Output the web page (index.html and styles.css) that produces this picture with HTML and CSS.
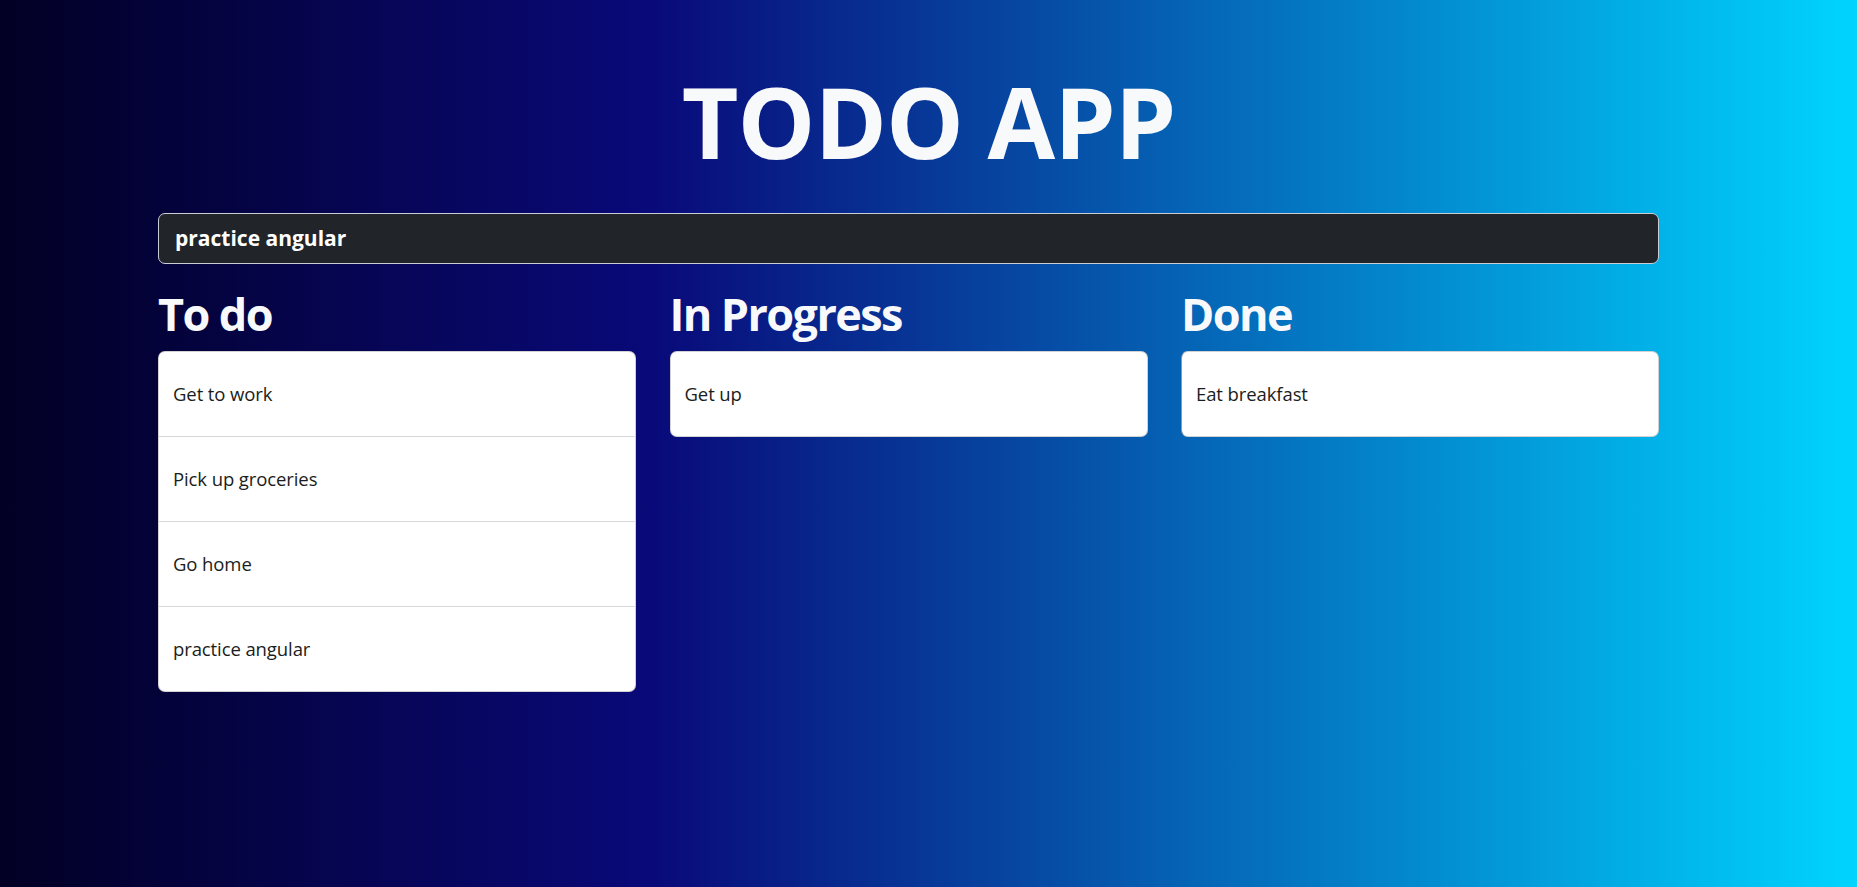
FILE: index.html
```html
<!DOCTYPE html>
<html lang="en">
<head>
<meta charset="utf-8">
<title>Todo App</title>
<link rel="stylesheet" href="styles.css">
</head>
<body>
<main class="page">
  <h1 class="title">TODO APP</h1>
  <div class="container">
    <input class="new-task" type="text" value="practice angular">
    <div class="board">
      <section class="column">
        <h2 class="column-title">To do</h2>
        <ul class="list">
          <li class="item">Get to work</li>
          <li class="item">Pick up groceries</li>
          <li class="item">Go home</li>
          <li class="item">practice angular</li>
        </ul>
      </section>
      <section class="column">
        <h2 class="column-title">In Progress</h2>
        <ul class="list">
          <li class="item">Get up</li>
        </ul>
      </section>
      <section class="column">
        <h2 class="column-title">Done</h2>
        <ul class="list list-done">
          <li class="item">Eat breakfast</li>
        </ul>
      </section>
    </div>
  </div>
</main>
</body>
</html>
```
FILE: styles.css
```css
html, body {
  margin: 0;
  padding: 0;
}

body {
  min-height: 100vh;
  background: linear-gradient(90deg, rgb(2, 0, 36) 0%, rgb(9, 9, 121) 35%, rgb(0, 212, 255) 100%);
  font-family: "Open Sans", "Noto Sans", sans-serif;
  color: #212529;
}

.page {
  padding-top: 63px;
  padding-bottom: 40px;
}

.title {
  margin: 0;
  text-align: center;
  font-size: 98px;
  line-height: 1.2;
  font-weight: 700;
  color: #f8f9fa;
  letter-spacing: -1px;
}

.container {
  width: 1501px;
  margin-left: 158px;
  margin-top: 32px;
}

.new-task {
  display: block;
  box-sizing: border-box;
  width: 100%;
  height: 51px;
  margin: 0;
  padding: 0 16px;
  background: #212529;
  border: 1px solid #c9ced6;
  border-radius: 7px;
  color: #ffffff;
  font-family: "Open Sans", "Noto Sans", sans-serif;
  font-weight: 700;
  font-size: 21px;
  outline: none;
}

.board {
  display: grid;
  grid-template-columns: repeat(3, 478px);
  column-gap: 33.5px;
  margin-top: 22px;
}

.column-title {
  margin: 0 0 10px 0;
  font-size: 45px;
  line-height: 55px;
  font-weight: 700;
  color: #f8f9fa;
  letter-spacing: -1.6px;
}

.list {
  list-style: none;
  margin: 0;
  padding: 0;
  background: #ffffff;
  border: 1px solid rgba(0, 0, 0, 0.175);
  border-radius: 7px;
  overflow: hidden;
}

.list-done {
  border-left-color: #8d98a8;
}

.item {
  padding: 28.5px 14px;
  font-size: 18.5px;
  line-height: 27px;
  color: #1a1d20;
  letter-spacing: -0.1px;
}

.item + .item {
  border-top: 1px solid #d6d8db;
}
```
